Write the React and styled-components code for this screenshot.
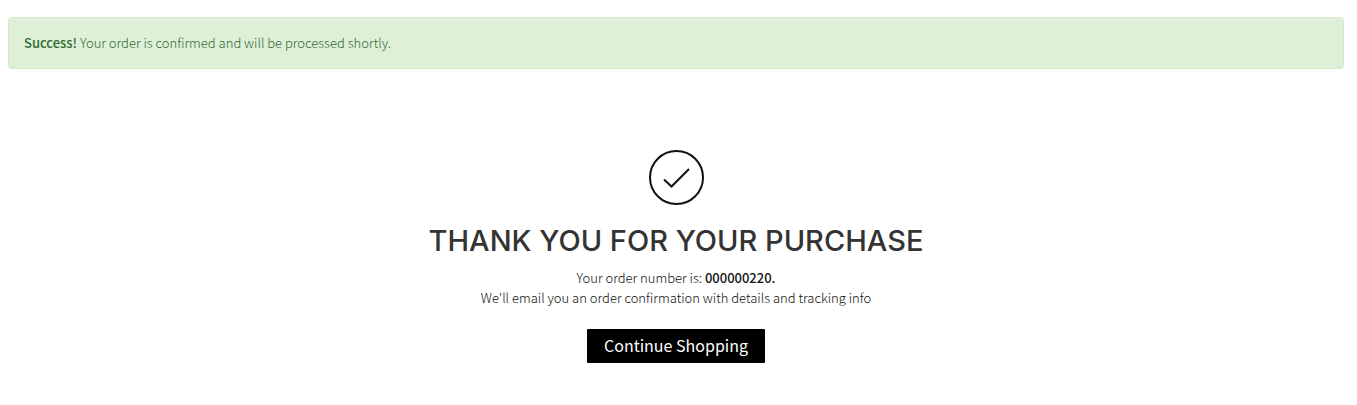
import React from "react";
import styled, { createGlobalStyle } from "styled-components";

const GlobalStyle = createGlobalStyle`
  * {
    box-sizing: border-box;
  }

  body {
    margin: 0;
    background: #fff;
    color: #111;
    font-family: "Noto Sans CJK SC", "Open Sans", sans-serif;
    font-size: 13px;
    font-weight: 300;
    line-height: 20px;
  }
`;

const Page = styled.main`
  padding: 17px 13px 40px 8px;
`;

const Alert = styled.div`
  padding: 15px;
  border: 1px solid #d6e9c6;
  border-radius: 4px;
  background: #dff0d8;
  color: #2f6b31;
`;

const Strong = styled.strong`
  font-weight: 500;
`;

const Confirmation = styled.section`
  display: flex;
  flex-direction: column;
  align-items: center;
  margin-top: 80px;
  text-align: center;
`;

const CheckIcon = styled.svg`
  width: 57px;
  height: 57px;
  fill: none;
  stroke: #111;
  stroke-width: 2;
`;

const Title = styled.h1`
  margin: 16px 0 8px;
  color: #333;
  font-family: Inter, "Liberation Sans", sans-serif;
  font-size: 29px;
  font-weight: 500;
  line-height: 38px;
  text-transform: uppercase;
`;

const Text = styled.p`
  margin: 0;
`;

const Button = styled.button`
  margin-top: 21px;
  padding: 4px 17px 6px;
  border: 0;
  border-radius: 1px;
  background: #000;
  color: #fff;
  font-family: inherit;
  font-size: 16px;
  line-height: 24px;
  cursor: pointer;
`;

export default function App() {
  return (
    <>
      <GlobalStyle />
      <Page>
        <Alert role="alert">
          <Strong>Success!</Strong> Your order is confirmed and will be
          processed shortly.
        </Alert>
        <Confirmation>
          <CheckIcon viewBox="0 0 57 57" aria-hidden="true">
            <circle cx="28.5" cy="28.5" r="26.5" />
            <path d="M16 30.5 L23.5 37.5 L41 20" />
          </CheckIcon>
          <Title>Thank you for your purchase</Title>
          <Text>
            Your order number is: <Strong>000000220.</Strong>
          </Text>
          <Text>
            We'll email you an order confirmation with details and tracking info
          </Text>
          <Button type="button">Continue Shopping</Button>
        </Confirmation>
      </Page>
    </>
  );
}
